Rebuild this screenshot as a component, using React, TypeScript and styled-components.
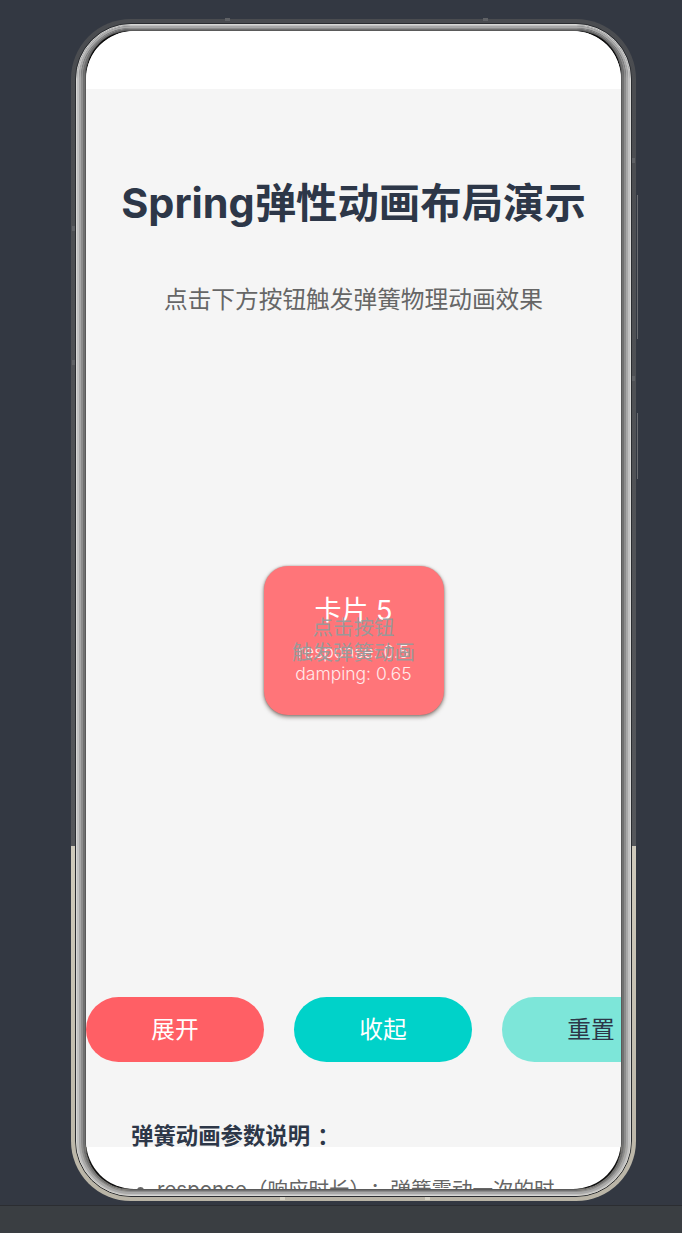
import React from 'react';
import styled, { createGlobalStyle } from 'styled-components';

const GlobalStyle = createGlobalStyle`
  html, body {
    margin: 0;
    padding: 0;
    background: #333842;
  }
  body {
    font-family: "Inter", "Noto Sans CJK SC", sans-serif;
    text-spacing-trim: space-all;
  }
`

// rings of the phone rim, outer to inner: [top, side, colour]
const rimBands: [number, number, string][] = [
  [1, 1, '#2a2c30'],
  [1, 1, '#d8d8d6'],
  [1, 2, '#c2c2c2'],
  [2, 2, '#a8a8a8'],
  [1, 2, '#8c8c8c'],
  [1, 2, '#707070'],
  [1, 1, '#5a5a5a'],
]

const ticks = [
  { x: 154, y: -1, w: 5, h: 3, light: false },
  { x: 412, y: -1, w: 5, h: 3, light: false },
  { x: 1, y: 207, w: 3, h: 5, light: false },
  { x: 1, y: 341, w: 3, h: 5, light: false },
  { x: 561, y: 139, w: 3, h: 5, light: false },
  { x: 561, y: 357, w: 3, h: 5, light: false },
  { x: 209, y: 1178, w: 5, h: 3, light: true },
  { x: 354, y: 1178, w: 5, h: 3, light: true },
]

const App = () => {
  const screen = (
    <Screen>
      <StatusArea />
      <Content>
        <Title>Spring弹性动画布局演示</Title>
        <Subtitle>点击下方按钮触发弹簧物理动画效果</Subtitle>
        <Stage>
          <Card>
            <CardTitle>卡片 5</CardTitle>
            <CardParam>response: 0.5</CardParam>
            <CardParam>damping: 0.65</CardParam>
            <Hint>点击按钮<br />触发弹簧动画</Hint>
          </Card>
        </Stage>
        <ButtonRow>
          <ActionButton $bg="#ff5f65" $fg="#ffffff">展开</ActionButton>
          <ActionButton $bg="#00d2c9" $fg="#ffffff">收起</ActionButton>
          <ActionButton $bg="#7de6d9" $fg="#2d3748">重置</ActionButton>
        </ButtonRow>
        <Notes>
          <NotesTitle>弹簧动画参数说明<NotesColon>：</NotesColon></NotesTitle>
          <NotesList>
            <li>response（响应时长）：弹簧震动一次的时长</li>
          </NotesList>
        </Notes>
      </Content>
      <NavArea />
    </Screen>
  )

  // wrap the screen in the rim rings, innermost first
  let radius = 56 - rimBands.reduce((sum, b) => sum + b[1], 0)
  const rim = rimBands.reduceRight((inner, [top, side, colour]) => {
    radius += side
    return <RimBand $top={top} $side={side} $colour={colour} $radius={radius}>{inner}</RimBand>
  }, <ScreenWell>{screen}</ScreenWell>)

  return (
    <Page>
      <GlobalStyle />
      <Desk>
        <Phone>
          <Bezel>{rim}</Bezel>
          {ticks.map((t, i) => (
            <Tick key={i} $x={t.x} $y={t.y} $w={t.w} $h={t.h} $light={t.light} />
          ))}
          <SideKey $top={176} $height={144} />
          <SideKey $top={394} $height={66} />
        </Phone>
      </Desk>
      <BottomBar />
    </Page>
  );
}

export default App;

const Page = styled.div`
  width: 682px;
  height: 1233px;
  display: flex;
  flex-direction: column;
  overflow: hidden;
  background: #333842;
`

const Desk = styled.div`
  flex: 1;
  min-height: 0;
  padding: 19px 0 0 71px;
`

const Phone = styled.div`
  position: relative;
  width: 565px;
  height: 1182px;
`

const Bezel = styled.div`
  box-sizing: border-box;
  width: 100%;
  height: 100%;
  padding: 4px;
  border-radius: 60px;
  background: linear-gradient(
    to bottom,
    #4a4c50 0,
    #55575b 70%,
    #cfcabb 70%,
    #b9b4a6 100%
  );
`

const RimBand = styled.div<{ $top: number; $side: number; $colour: string; $radius: number }>`
  box-sizing: border-box;
  width: 100%;
  height: 100%;
  border-style: solid;
  border-color: ${p => p.$colour};
  border-width: ${p => p.$top}px ${p => p.$side}px;
  border-radius: ${p => p.$radius}px;
`

const ScreenWell = styled.div`
  width: 100%;
  height: 100%;
  background: #0c0c0c;
  border-radius: 44px;
  overflow: hidden;
`

const Screen = styled.div`
  height: 100%;
  display: flex;
  flex-direction: column;
  background: #ffffff;
  border-radius: 48px;
  overflow: hidden;
`

const StatusArea = styled.div`
  flex: 0 0 58px;
  background: #ffffff;
`

const NavArea = styled.div`
  flex: 0 0 42px;
`

const Content = styled.div`
  flex: 1;
  min-height: 0;
  display: flex;
  flex-direction: column;
  background: #f5f5f5;
`

const Title = styled.h1`
  margin: 86px 0 0;
  font-size: 41.4px;
  line-height: 56px;
  font-weight: 700;
  text-align: center;
  color: #2d3748;
`

const Subtitle = styled.p`
  margin: 53px 0 0;
  font-size: 23.7px;
  line-height: 32px;
  text-align: center;
  color: #666666;
`

const Stage = styled.div`
  flex: 1;
  min-height: 0;
  display: flex;
  align-items: center;
  justify-content: center;
  padding-bottom: 32px;
`

const Card = styled.div`
  position: relative;
  box-sizing: border-box;
  width: 180px;
  height: 149px;
  display: flex;
  flex-direction: column;
  align-items: center;
  justify-content: center;
  padding-bottom: 4px;
  border-radius: 24px;
  background: #ff7579;
  box-shadow: 0 2px 4px rgba(70, 50, 40, 0.6), 0 0 2px rgba(70, 50, 40, 0.4);
  color: #ffffff;
`

const CardTitle = styled.div`
  margin-bottom: 12px;
  font-size: 27px;
  line-height: 36px;
  font-weight: 400;
`

const CardParam = styled.div`
  font-size: 17.5px;
  line-height: 22px;
  font-weight: 300;
  opacity: 0.85;
`

const Hint = styled.div`
  position: absolute;
  left: 0;
  right: 0;
  top: 49px;
  font-size: 20.5px;
  line-height: 25px;
  text-align: center;
  color: rgba(150, 155, 155, 0.95);
`

const ButtonRow = styled.div`
  display: flex;
  gap: 30px;
`

const ActionButton = styled.button<{ $bg: string; $fg: string }>`
  flex: 0 0 178px;
  height: 65px;
  padding: 0 0 3px;
  border: none;
  border-radius: 33px;
  background: ${p => p.$bg};
  color: ${p => p.$fg};
  font-family: inherit;
  font-size: 23.7px;
  font-weight: 400;
`

const Notes = styled.div`
  flex: 0 0 85px;
  min-height: 0;
  box-sizing: border-box;
  padding: 58px 45px 0;
`

const NotesTitle = styled.h2`
  margin: 0;
  font-size: 22.4px;
  line-height: 32px;
  font-weight: 700;
  color: #2d3748;
`

const NotesColon = styled.span`
  margin-left: 7px;
`

const NotesList = styled.ul`
  margin: 22px 0 0;
  padding: 0 20px 0 26px;
  font-size: 20.5px;
  line-height: 32px;
  color: #666666;
`

const BottomBar = styled.div`
  flex: 0 0 28px;
  box-sizing: border-box;
  border-top: 1px solid #2b2d31;
  background: #3a3e42;
`

const Tick = styled.span<{ $x: number; $y: number; $w: number; $h: number; $light: boolean }>`
  position: absolute;
  left: ${p => p.$x}px;
  top: ${p => p.$y}px;
  width: ${p => p.$w}px;
  height: ${p => p.$h}px;
  background: ${p => (p.$light ? '#d6d2c4' : '#5f6165')};
`

const SideKey = styled.span<{ $top: number; $height: number }>`
  position: absolute;
  right: -2px;
  top: ${p => p.$top}px;
  width: 1px;
  height: ${p => p.$height}px;
  background: #6a6c70;
`
